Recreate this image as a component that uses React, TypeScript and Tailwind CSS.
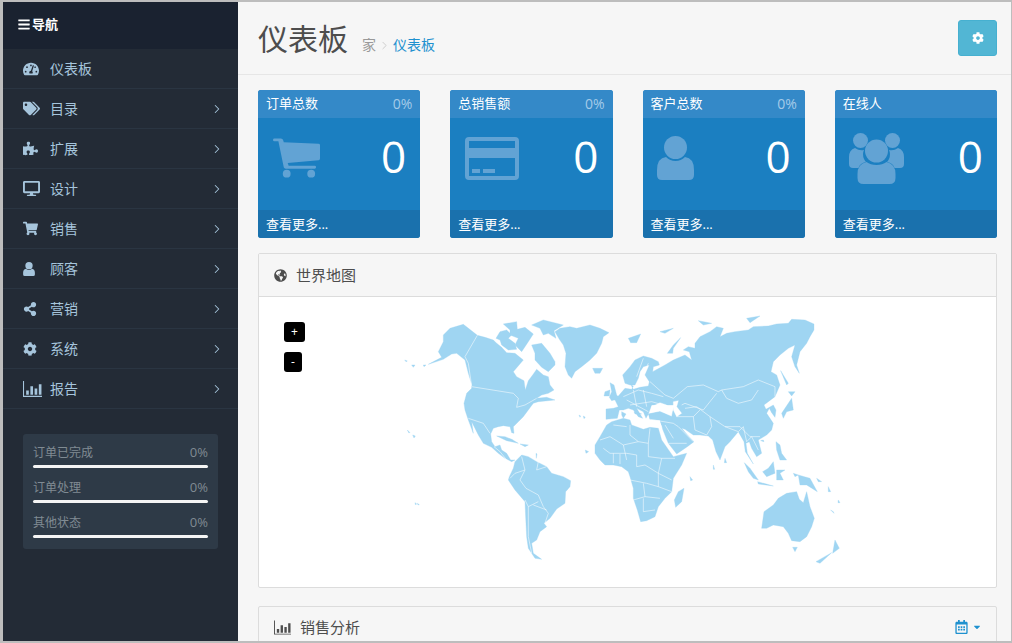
import React from "react";
import {
  FaBars, FaTachometerAlt, FaTags, FaPuzzlePiece, FaDesktop, FaShoppingCart, FaShareAlt, FaCog,
  FaGlobeAmericas, FaCaretDown, FaRegCalendarAlt,
} from "react-icons/fa";
import { ChevronRight } from "lucide-react";

const BarChartIcon = ({ className }: { className?: string }) => (
  <svg viewBox="0 0 18 15" className={className} fill="currentColor">
    <path d="M0 0h1v14h17v1H0z" />
    <path d="M3 9h2.500v4H3zM7 5h2.500v8H7zM11 7h2.500v6H11zM15 3h2.500v10H15z" />
  </svg>
);

const PersonGlyph = ({ className }: { className?: string }) => (
  <svg viewBox="0 0 37 44" className={className} fill="currentColor">
    <circle cx="18.500" cy="11.500" r="11.500" />
    <path d="M9 21q4 4 9.500 4T28 21q9 1 9 13v5q0 5-5 5H5q-5 0-5-5v-5q0-12 9-13z" />
  </svg>
);

const menu: [string, React.ReactNode, boolean][] = [
  ["仪表板", <FaTachometerAlt className="w-4 h-4" />, false],
  ["目录", <FaTags className="w-[17px] h-[17px]" />, true],
  ["扩展", <FaPuzzlePiece className="w-[15px] h-[15px]" />, true],
  ["设计", <FaDesktop className="w-[17px] h-[17px]" />, true],
  ["销售", <FaShoppingCart className="w-[15px] h-[15px]" />, true],
  ["顾客", <PersonGlyph className="w-[12px] h-[14px]" />, true],
  ["营销", <FaShareAlt className="w-[14px] h-[14px]" />, true],
  ["系统", <FaCog className="w-[14px] h-[14px]" />, true],
  ["报告", <BarChartIcon className="w-[19px] h-[16px]" />, true],
];

const CartIcon = () => (
  <svg viewBox="0 0 48 40" className="w-[47px] h-[40px]" fill="currentColor">
    <path d="M0 1.500Q0 0 1.500 0H8q2 0 2.500 2L11 4l35.500 1.500q1.500 0 1.500 1.500v13.500q0 1.500-1.500 1.800L15 25l1 3h26.500q1.500 0 1.500 1.500T42.500 31H13q-1.500 0-2-1.500L5.500 3H1.500Q0 3 0 1.500z" />
    <circle cx="14" cy="36" r="4" />
    <circle cx="39" cy="36" r="4" />
  </svg>
);
const CardIcon = () => (
  <svg viewBox="0 0 54 43" className="w-[54px] h-[43px]" fill="currentColor">
    <path fillRule="evenodd" d="M4 0h46q4 0 4 4v35q0 4-4 4H4q-4 0-4-4V4q0-4 4-4zM4 4v7h46V4zM4 21v18h46V21z" />
    <path d="M7 32h8v4H7zM18 32h12v4H18z" />
  </svg>
);
const UsersIcon = () => (
  <svg viewBox="0 0 55 51" className="w-[55px] h-[51px]" fill="currentColor">
    <circle cx="11.500" cy="7.500" r="7.500" />
    <circle cx="43.500" cy="7.500" r="7.500" />
    <path d="M6 15q4 3 9 2-2 4 0 9 1 2 2 3-6 1-7.500 6H4q-4 0-4-4v-7q0-7 6-9zM49 15q-4 3-9 2 2 4 0 9-1 2-2 3 6 1 7.500 6H51q4 0 4-4v-7q0-7-6-9z" />
    <circle cx="27.500" cy="18" r="11.500" />
    <path d="M17.500 29q4 3 10 3t10-3q9 2 9 12v4q0 6-6 6h-26q-6 0-6-6v-4q0-10 9-12z" />
  </svg>
);

const cards: [string, string, React.ReactNode, string][] = [
  ["订单总数", "0%", <CartIcon />, "ml-0"],
  ["总销售额", "0%", <CardIcon />, "ml-0"],
  ["客户总数", "0%", <PersonGlyph className="w-[37px] h-[44px]" />, "-ml-[1px]"],
  ["在线人", "", <UsersIcon />, "-ml-[1px]"],
];

const A: string[] = [
  "115,125 130,95 130,75 150,55 190,43 232,76 255,82 280,90 290,100 305,112 320,128 345,130 370,150 340,185 350,200 372,212 376,240 385,212 398,195 410,178 430,195 445,200 450,225 462,240 445,250 425,255 410,265 440,262 465,270 415,275 400,280 385,300 370,320 355,335 340,350 342,370 335,368 330,350 310,347 295,350 280,355 272,372 275,395 285,410 300,405 305,420 320,430 332,450 345,450 335,455 315,445 295,430 275,412 250,400 235,375 220,345 215,335 220,370 205,330 195,300 192,280 200,250 215,235 215,222 205,190 195,150 170,130 155,132 130,148 85,163 125,142",
  "328,500 340,475 345,455 365,435 385,440 410,455 440,470 455,490 490,500 512,512 510,530 497,545 495,580 470,597 450,625 432,640 440,650 420,665 410,690 395,700 400,730 425,748 405,745 385,715 380,680 377,620 375,575 345,540 325,510",
  "465,65 480,55 510,50 530,55 570,45 600,55 627,68 610,80 605,100 590,130 570,150 545,170 525,185 515,205 505,195 495,170 498,130 490,105 478,88",
  "288,85 300,65 320,60 335,75 325,85 345,100 350,118 325,120 305,105 300,90",
  "395,45 430,30 490,45 462,62 468,85 445,70 430,75 420,55",
  "310,42 350,35 352,58 375,52 400,72 385,95 365,125 345,105 355,85 330,75 330,60",
  "395,105 425,100 450,130 465,155 465,165 445,185 425,172 405,150 405,130",
  "578,175 608,175 600,190 585,190",
  "290,378 315,380 335,388 355,400 320,392",
  "360,402 385,405 375,410",
  "22,360 30,368 26,368","38,375 46,378 42,384",
  "14,150 22,153 18,155","35,165 45,165 40,172","70,165 78,165 72,170",
  "408,430 411,432 409,445","45,578 50,582 46,584","52,580 58,584 54,585",
  "537,315 542,318 540,322","550,318 556,322 552,326","556,420 566,425 558,430",
];

const EURASIA = "-12,328 -12,297 10,295 25,290 15,270 5,265 25,258 45,235 65,238 70,228 63,225 70,238 90,232 115,228 118,215 105,195 118,165 100,170 90,185 85,205 75,225 60,225 45,220 38,195 60,170 75,150 100,138 125,145 145,155 148,165 130,170 128,185 165,165 190,150 225,135 245,150 238,125 220,120 235,110 255,115 255,100 270,80 300,65 320,50 340,55 330,80 350,70 375,65 415,60 430,50 475,48 500,42 535,40 545,28 585,30 612,42 612,60 600,80 590,100 570,125 560,165 568,190 555,170 545,140 555,105 535,115 510,135 490,155 483,185 500,195 510,225 495,260 475,275 462,285 468,298 490,285 498,300 495,322 485,308 478,295 470,310 490,340 485,360 470,375 445,390 450,410 455,430 440,440 425,415 418,395 408,400 412,430 430,462 406,425 402,395 385,365 360,395 345,410 330,450 318,425 308,390 295,378 270,375 250,375 225,358 215,355 235,378 252,395 232,410 200,432 175,400 158,358 155,345 150,330 120,328 115,312 150,305 185,320 188,305 195,285 125,285 115,312 108,325 100,305 80,295 98,325 85,320 70,300 55,295 40,300 28,300 22,325";
const AFR = "-45,405 -30,380 -10,345 5,335 40,325 60,330 65,345 100,358 120,352 145,355 155,390 190,440 230,430 215,465 190,505 185,545 165,565 145,590 135,620 110,632 92,635 82,600 70,565 70,535 60,500 55,485 35,470 10,465 -15,465 -30,450 -45,430";
const B: string[] = [
  EURASIA, AFR,
  "222,535 215,575 197,592 193,570 205,545",
  "455,655 462,605 490,585 505,565 530,550 560,545 568,568 580,578 590,545 600,590 613,625 605,650 590,680 570,695 545,692 535,670 520,650 490,645 470,655",
  "548,712 562,712 555,725","675,690 688,715 668,730","665,728 630,760 618,755",
  "403,458 420,475 445,510 430,505 415,485","443,515 490,528 445,522",
  "490,455 495,490 470,500 458,485 475,475","500,480 525,480 510,490 520,510 500,510",
  "565,495 600,505 622,545 590,525 570,525",
  "498,395 510,405 515,430 530,450 510,450 500,420",
  "520,325 515,310 545,265 550,300 530,305","535,245 555,245 545,258",
  "512,182 535,220 530,225",
  "172,130 190,105 212,83 190,115 188,130","55,85 92,72 80,98 62,98",
  "345,445 350,458 343,458","150,65 190,55 165,70","265,32 305,40 280,45","410,25 450,18 420,38",
  "0,218 12,225 20,255 28,265 5,272 -2,262 5,245","-15,245 0,240 -2,258 -18,258",
  "72,305 95,312 75,312","35,305 48,312 40,325 35,315","-2,300 5,305 -2,310",
  "118,312 150,305 185,320 188,345 155,345 150,330 120,328","620,505 635,515 625,515","655,530 662,545 655,545","240,500 248,510 242,512",
  "310,465 314,478 310,478","460,390 462,395 452,392","670,605 672,610 662,600","550,490 565,495 555,500","685,570 690,578 684,578",
];
const W: string[] = [
  "190,275 205,272 200,290 215,310 200,320 190,300",
  "125,290 150,278 170,285 185,300 165,300 140,300 125,305",
];
const L6: string[] = [
  "232,76 195,140 205,160 215,228","215,230 340,250 355,265 350,292 375,285 410,265","205,325 250,340 270,370",
  "282,410 300,425 320,450","365,440 375,480 345,490 330,505","375,480 360,510 378,535 415,555 430,590 445,610 435,640",
  "375,570 385,590 415,575","385,590 385,680 395,730","400,585 440,600","415,455 410,480 440,470",
];
const L7: string[] = [
  "120,215 165,255 190,265 232,230 280,225 325,245 335,240 400,230 445,210 495,230 495,260",
  "335,240 350,265 385,280 425,270 445,240","215,285 225,280 280,300 320,250","300,320 345,350 390,350 420,380 450,380",
  "200,320 250,320 255,360 290,375","190,340 205,350 250,395","300,320 305,350 290,375","345,350 385,365 400,350","400,350 410,395 425,380 445,420",
  "225,295 260,290 300,320","40,260 85,240 125,250 160,260","60,285 125,275 160,285","70,240 80,290","100,240 110,290","50,270 115,305","80,200 100,145","95,205 115,160",
  "0,380 40,405 85,395 115,400 120,355","60,345 60,375 85,395","40,405 50,450","0,430 50,430 80,435 80,470","115,400 115,440 155,445 195,445",
  "155,445 145,490 185,510","80,470 105,465 145,490 145,530 185,545","60,510 110,520 145,530","100,520 105,560 70,570","105,560 150,565","100,565 100,605 135,600",
  "10,430 10,460","30,432 30,462","-20,415 0,430","-30,390 0,380","120,328 190,340","165,345 190,385","250,320 270,300","50,350 10,345","175,400 230,400",
];

const WorldMap = () => (
  <svg viewBox="259 297 737 290" className="block w-[737px] h-[290px]">
    <g transform="translate(400 310) scale(.3333)" fill="#9fd5f2" stroke="#9fd5f2" strokeWidth="1" strokeLinejoin="round">
      {A.map((p, i) => <polygon key={i} points={p} />)}
    </g>
    <g transform="translate(610 310) scale(.3333)" fill="#9fd5f2" stroke="#9fd5f2" strokeWidth="1" strokeLinejoin="round">
      {B.map((p, i) => <polygon key={i} points={p} />)}
      {W.map((p, i) => <polygon key={i} points={p} fill="#fff" stroke="#fff" />)}
    </g>
    <g transform="translate(400 310) scale(.3333)" fill="none" stroke="#fff" strokeOpacity=".8" strokeWidth="2">
      {L6.map((p, i) => <polyline key={i} points={p} />)}
    </g>
    <g transform="translate(610 310) scale(.3333)" fill="none" stroke="#fff" strokeOpacity=".8" strokeWidth="2">
      {L7.map((p, i) => <polyline key={i} points={p} />)}
    </g>
  </svg>
);

const Stat = ({ label }: { label: string }) => (
  <div className="h-[35px] pt-[7px]">
    <div className="flex justify-between items-center h-[20px] text-[12px] leading-[20px] text-[#808b93]">
      <span>{label}</span>
      <span className="text-[13px] leading-[18px] mb-[2px]">0%</span>
    </div>
    <div className="mt-[2px] h-[3px] rounded-sm bg-[#f5f5f5]" />
  </div>
);

export default function App() {
  return (
    <div className="flex w-[1012px] h-[643px] overflow-hidden border-t-2 border-b-2 border-l-[3px] border-r border-[#bdbdbd] bg-[#f6f6f6] [font-family:'Open_Sans','Noto_Sans_CJK_SC',sans-serif]">
      <aside className="w-[235px] shrink-0 bg-[#232b36]">
        <div className="flex items-center gap-[2px] h-[47px] pb-[2px] pl-[15px] bg-[#1a2230] text-white text-[13px] font-bold">
          <FaBars className="w-[12px] h-[13px]" />
          <span>导航</span>
        </div>
        {menu.map(([label, icon, more]) => (
          <div key={label} className="flex items-center h-[40px] border-b border-[#2a3542] text-[#a6c5dc] text-[14px]">
            <div className="w-[47px] pl-[20px] flex items-center">{icon}</div>
            <span className="flex-1">{label}</span>
            {more && <ChevronRight className="w-[14px] h-[14px] mr-[14px]" strokeWidth={1.75} />}
          </div>
        ))}
        <div className="mx-[20px] mt-[25px] h-[115px] rounded-[3px] bg-[#2e3a47] px-[10px] py-[2px]">
          <Stat label="订单已完成" />
          <Stat label="订单处理" />
          <Stat label="其他状态" />
        </div>
      </aside>
      <main className="flex-1 min-w-0">
        <header className="flex items-center justify-between h-[73px] pl-[20px] pr-[14px] border-b border-[#e6e6e6]">
          <div className="flex items-baseline pt-[1px]">
            <h1 className="text-[30px] font-normal text-[#4d4d4d] leading-[40px]">仪表板</h1>
            <span className="ml-[14px] text-[14px] text-[#999]">家</span>
            <ChevronRight className="mx-[2px] w-[13px] h-[13px] text-[#c4c4c4] self-center mt-[14px]" strokeWidth={1.5} />
            <span className="text-[14px] text-[#1e91cf]">仪表板</span>
          </div>
          <button className="flex items-center justify-center w-[39px] h-[36px] rounded-[3px] bg-[#52b6d4] border border-[#46b0d0] text-white">
            <FaCog className="w-[12px] h-[12px]" />
          </button>
        </header>
        <div className="pl-[20px] pr-[14px] pt-[15px]">
          <div className="grid grid-cols-4 gap-[30px]">
            {cards.map(([title, pct, icon, shift], i) => (
              <div key={i} className="h-[148px] rounded-[3px] overflow-hidden bg-[#1b7fc1] text-white flex flex-col">
                <div className="flex justify-between items-center h-[28px] px-[8px] bg-[#3489c8] text-[13px]">
                  <span>{title}</span>
                  <span className="text-[14px] text-[#a4cbe8] mb-[2px]">{pct}</span>
                </div>
                <div className="flex-1 flex items-center justify-between pl-[15px] pr-[14px] pb-[16px]">
                  <div className={`text-[#62a3d4] flex items-center h-[52px] mt-[4px] ${shift}`}>{icon}</div>
                  <span className="text-[44px] leading-none">0</span>
                </div>
                <div className="h-[28px] px-[8px] bg-[#1a71ad] text-[13px] leading-[28px]">查看更多...</div>
              </div>
            ))}
          </div>
          <section className="mt-[15px] h-[335px] border border-[#dcdcdc] rounded-[2px] bg-white overflow-hidden">
            <div className="flex items-center h-[43px] px-[15px] bg-[#f6f6f6] border-b border-[#dcdcdc] text-[#4d4d4d] text-[15px]">
              <FaGlobeAmericas className="w-[13px] h-[13px] mr-[9px]" />
              <span>世界地图</span>
            </div>
            <div className="relative">
              <WorldMap />
              <div className="absolute left-[25px] top-[25px] w-[21px] h-[20px] rounded-[3px] bg-black text-white text-[12px] leading-[20px] text-center">+</div>
              <div className="absolute left-[25px] top-[55px] w-[18px] h-[20px] rounded-[3px] bg-black text-white text-[12px] leading-[20px] text-center">-</div>
            </div>
          </section>
          <section className="mt-[18px] h-[60px] border border-[#dcdcdc] rounded-[2px]">
            <div className="flex items-center justify-between h-[40px] pl-[15px] pr-[14px] text-[#4d4d4d] text-[15px]">
              <div className="flex items-center">
                <BarChartIcon className="w-[17px] h-[15px] mr-[9px]" />
                <span>销售分析</span>
              </div>
              <div className="flex items-center gap-[4px] text-[#1e91cf]">
                <FaRegCalendarAlt className="w-[13px] h-[14px]" />
                <FaCaretDown className="w-[10px] h-[10px]" />
              </div>
            </div>
          </section>
        </div>
      </main>
    </div>
  );
}
